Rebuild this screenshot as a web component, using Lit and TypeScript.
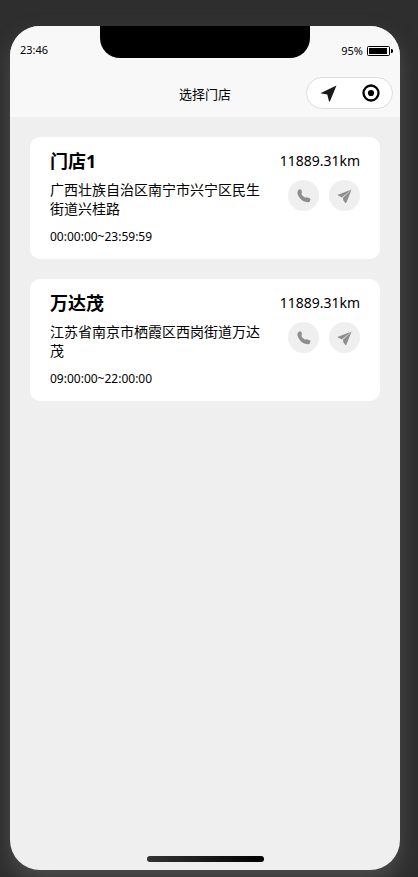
import { LitElement, html, css, svg } from "lit";
import { customElement, property } from "lit/decorators.js";

interface Store {
  name: string;
  address: string;
  hours: string;
  distance: string;
}

const stores: Store[] = [
  { name: "门店1", address: "广西壮族自治区南宁市兴宁区民生街道兴桂路", hours: "00:00:00~23:59:59", distance: "11889.31km" },
  { name: "万达茂", address: "江苏省南京市栖霞区西岗街道万达茂", hours: "09:00:00~22:00:00", distance: "11889.31km" },
];

const phoneIcon = svg`<path d="M2 .4 L3.600 .6 Q4.500 .8 4.600 1.600 L4.900 3.600 Q4.900 4.400 4.300 4.900 Q5.600 7.500 8.300 8.800 Q8.800 8.100 9.600 8.300 L12.700 9.300 Q13.600 9.700 13.400 10.600 L12.900 12.200 Q12.300 13.500 10.600 13.300 Q3 12.100 .6 4.900 Q-.1 1.500 2 .4 Z"/>`;
const planeIcon = svg`<path d="M14.600 .4 L.3 5.900 L4.800 8.600 Z"/><path d="M14.600 .4 L5.800 9.100 L6.500 11.400 L8.300 13.900 L9.200 13.900 Z"/>`;

@customElement("store-card")
export class StoreCard extends LitElement {
  @property({ attribute: false }) store!: Store;

  static styles = css`
    :host { display: block; }
    .card {
      display: flex;
      gap: 18px;
      padding: 12px 20px 13px;
      border-radius: 10px;
      background: #fff;
    }
    .info { flex: 1; min-width: 0; }
    .name { margin: 0; font-size: 18px; line-height: 24px; font-weight: 700; }
    .address { margin: 7px 0 10px; font-size: 14px; line-height: 19px; }
    .hours { margin: 0; font-size: 12px; line-height: 18px; }
    .side { display: flex; flex-direction: column; align-items: flex-end; gap: 7px; }
    .distance { font-size: 14px; line-height: 24px; }
    .actions { display: flex; gap: 10px; }
    .action {
      display: grid;
      place-items: center;
      width: 31px;
      height: 31px;
      padding: 0;
      border: 0;
      border-radius: 50%;
      background: #efefef;
      cursor: pointer;
    }
    .icon { display: block; fill: #8e8e8e; }
  `;

  render() {
    const s = this.store;
    return html`
      <article class="card">
        <div class="info">
          <h2 class="name">${s.name}</h2>
          <p class="address">${s.address}</p>
          <p class="hours">${s.hours}</p>
        </div>
        <div class="side">
          <span class="distance">${s.distance}</span>
          <div class="actions">
            <button class="action" aria-label="拨打电话">
              <svg class="icon" width="14" height="14" viewBox="0 0 14 14">${phoneIcon}</svg>
            </button>
            <button class="action" aria-label="导航">
              <svg class="icon" width="15" height="14" viewBox="0 0 15 14">${planeIcon}</svg>
            </button>
          </div>
        </div>
      </article>
    `;
  }
}

@customElement("app-root")
export class AppRoot extends LitElement {
  static styles = css`
    :host {
      display: flex;
      box-sizing: border-box;
      min-height: 100vh;
      padding: 26px 18px 7px 10px;
      overflow: hidden;
      background: #2e2e2e;
      color: #000;
      font-family: "Noto Sans", "Noto Sans CJK SC", sans-serif;
    }
    .phone {
      flex: 1;
      min-width: 0;
      display: flex;
      flex-direction: column;
      overflow: hidden;
      border-radius: 30px;
      background: #efefef;
      box-shadow: 0 10px 20px #4c4c4c;
    }
    .head { background: #f8f8f8; }
    .status {
      display: grid;
      grid-template-columns: 1fr 210px 1fr;
      height: 44px;
    }
    .time { padding: 16px 0 0 10px; font-size: 11px; line-height: 16px; }
    .notch { height: 32px; border-radius: 0 0 20px 20px; background: #000; }
    .power {
      display: flex;
      justify-content: flex-end;
      align-items: center;
      gap: 4px;
      height: 16px;
      padding: 17px 7px 0 0;
      font-size: 11px;
      line-height: 16px;
    }
    .battery { display: block; }
    .nav {
      display: grid;
      grid-template-columns: 1fr auto 1fr;
      align-items: start;
      box-sizing: border-box;
      height: 47px;
      padding-top: 7px;
    }
    .title { grid-column: 2; margin: 0; font-size: 13px; line-height: 34px; font-weight: 400; }
    .capsule {
      justify-self: end;
      display: flex;
      box-sizing: border-box;
      width: 87px;
      height: 32px;
      margin-right: 7px;
      border: 1px solid #dedede;
      border-radius: 16px;
      overflow: hidden;
      background: #fff;
    }
    .tool {
      flex: 1;
      display: grid;
      place-items: center;
      padding: 0;
      border: 0;
      background: none;
      cursor: pointer;
    }
    .glyph { display: block; }
    .list {
      flex: 1;
      display: flex;
      flex-direction: column;
      gap: 20px;
      padding: 20px;
    }
    .home {
      align-self: center;
      width: 30%;
      height: 6px;
      margin-bottom: 8px;
      border-radius: 3px;
      background: linear-gradient(90deg, #333, #000);
    }
  `;

  render() {
    return html`
      <div class="phone">
        <header class="head">
          <div class="status">
            <span class="time">23:46</span>
            <div class="notch"></div>
            <div class="power">
              <span>95%</span>
              <svg class="battery" width="26" height="10" viewBox="0 0 26 10">
                <rect x=".5" y=".5" width="22" height="9" rx="1" fill="none" stroke="#000" />
                <rect x="2" y="2" width="18" height="6" />
                <path d="M24 3h1l1 1v2l-1 1h-1z" />
              </svg>
            </div>
          </div>
          <div class="nav">
            <h1 class="title">选择门店</h1>
            <div class="capsule">
              <button class="tool" aria-label="位置">
                <svg class="glyph" width="17" height="17" viewBox="0 0 17 17">
                  <path d="M16.500 .4 L.3 8.300 L7.300 9.600 L9 16.500 L9.900 16.500 Z" fill="#1a1a1a" />
                </svg>
              </button>
              <button class="tool" aria-label="关闭">
                <svg class="glyph" width="18" height="18" viewBox="0 0 18 18">
                  <circle cx="9" cy="9" r="7.500" fill="none" stroke="#000" stroke-width="2.300" />
                  <circle cx="9" cy="9" r="3.100" />
                </svg>
              </button>
            </div>
          </div>
        </header>
        <main class="list">
          ${stores.map((s) => html`<store-card .store=${s}></store-card>`)}
        </main>
        <div class="home"></div>
      </div>
    `;
  }
}
